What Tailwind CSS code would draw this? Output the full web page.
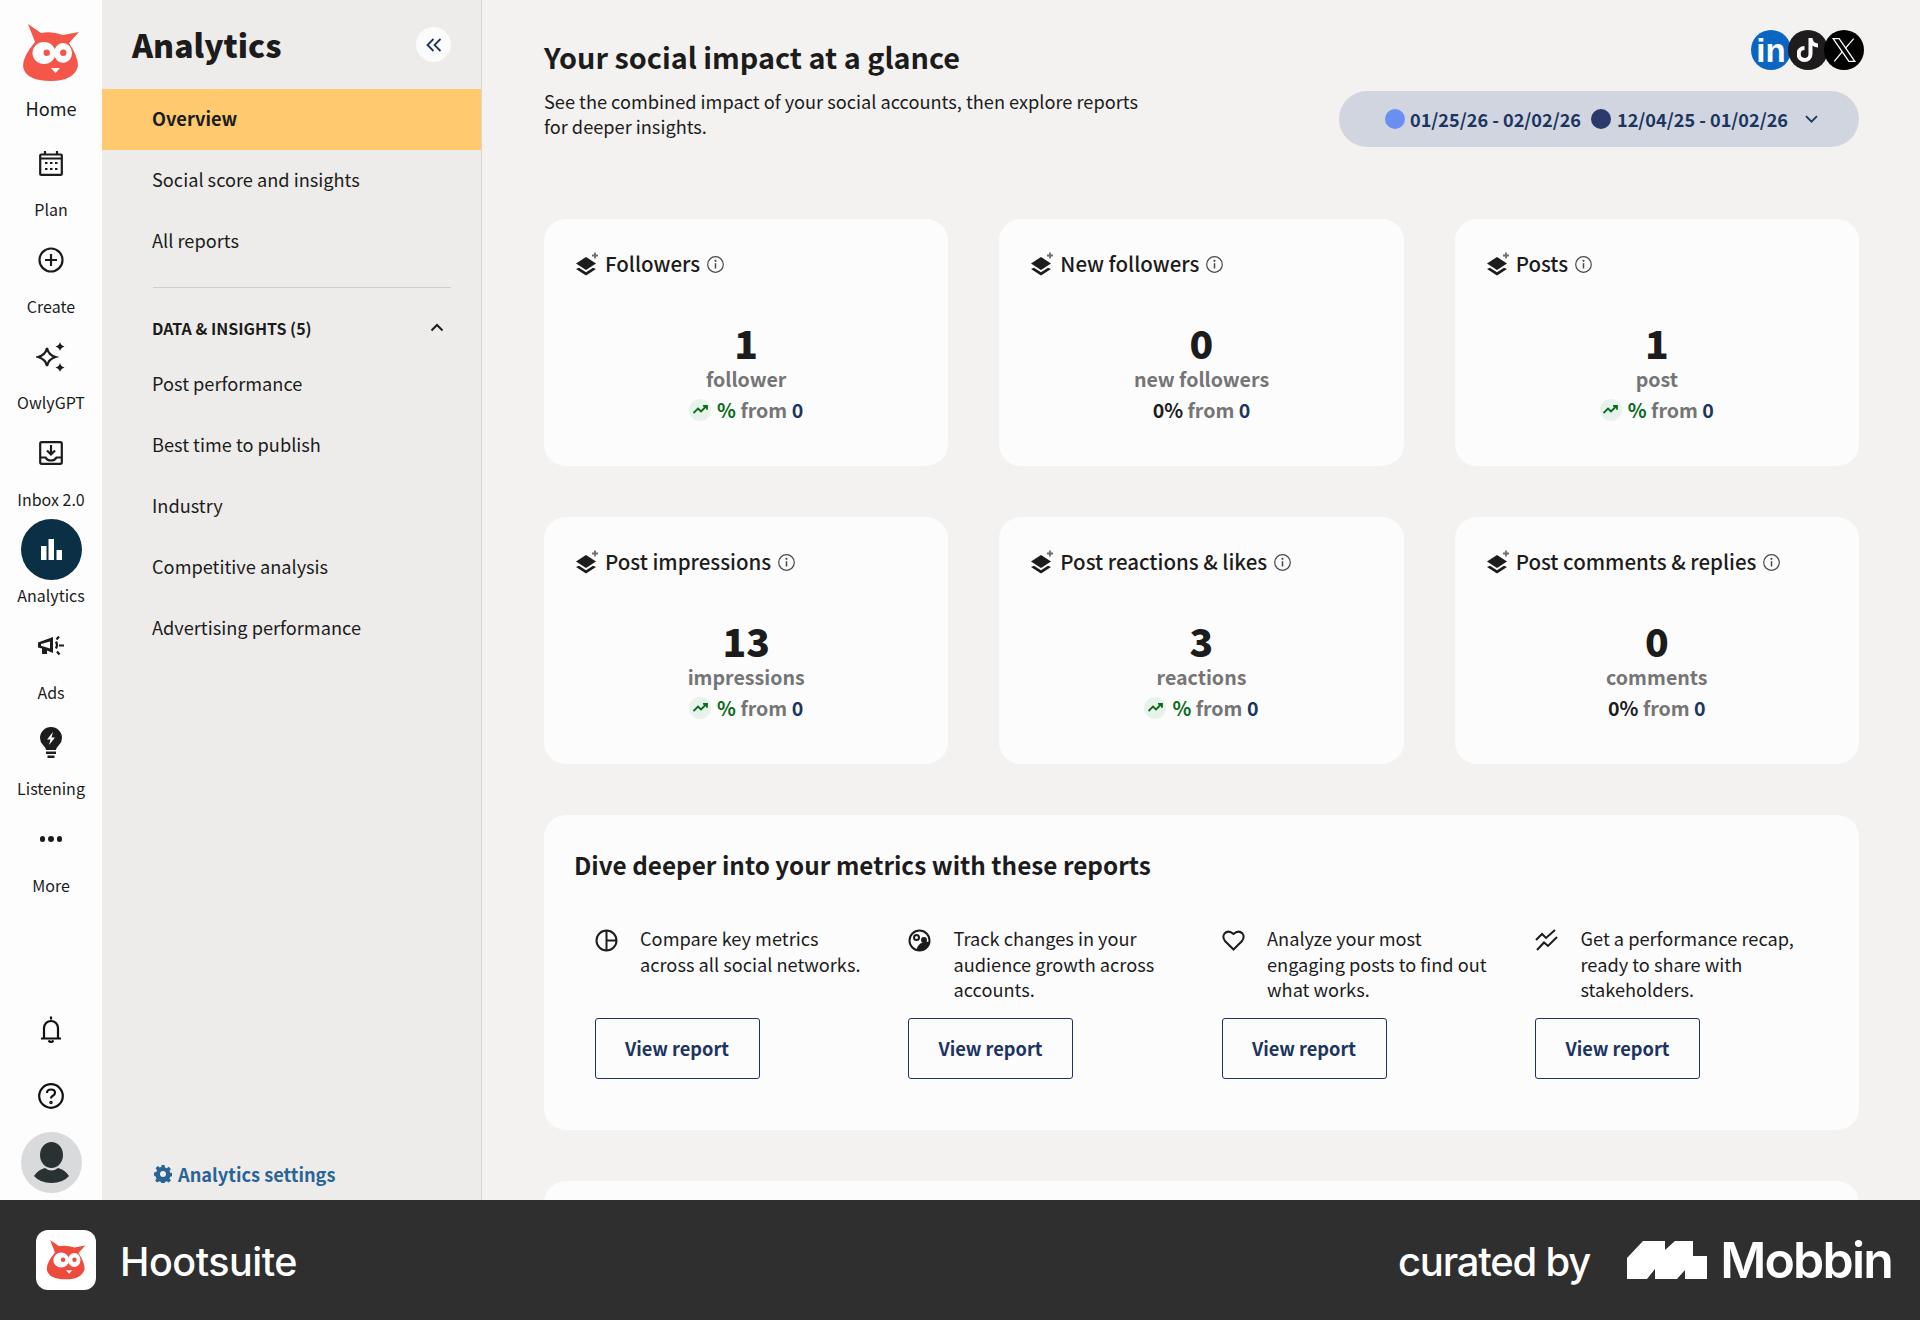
<!DOCTYPE html>
<html lang="en">
<head>
  <meta charset="UTF-8" />
  <title>Hootsuite Analytics</title>
  <script src="https://cdn.jsdelivr.net/npm/@tailwindcss/browser@4"></script>
</head>
<body class="font-['Noto_Sans_CJK_SC',sans-serif] text-[#1c1c1c]">
<div class="w-[1920px] h-[1320px] flex flex-col overflow-hidden">
  <div class="h-[1200px] flex">

    <!-- rail -->
    <nav class="w-[102px] shrink-0 bg-[#fdfdfd] flex flex-col items-center">
      <svg class="mt-[24px] w-[58px] h-[58px]" viewBox="0 0 58 58"><path d="M6 0 L19 9 Q30 7 41 11 L57 8 L47 19 Q56 32 56 42 Q52 57 29 57 Q3 57 1 42 Q1 32 13 18 Z" fill="#f4574a"/><ellipse cx="22" cy="29" rx="11.500" ry="11" fill="#fff"/><ellipse cx="41" cy="29" rx="9" ry="10" fill="#fff"/><circle cx="24.700" cy="28.700" r="3.200" fill="#f4574a"/><circle cx="41.300" cy="28.700" r="3.200" fill="#f4574a"/><path d="M33.500 34 L38 43 H29 Z" fill="#f4574a"/><path d="M29 44 H38 L33.500 49 Z" fill="#fff"/></svg>
      <div class="mt-[14px] h-[24px] leading-[24px] text-[18.200px]">Home</div>
      <div id="rail" class="mt-[23.500px] w-full"></div>
      <div class="mt-auto flex flex-col items-center pb-[7px]">
        <svg class="w-[22px] h-[27px]" viewBox="0 0 22 27" fill="none" stroke="#111" stroke-width="2.200"><path d="M1 22.500h20M4 22V12a7 7 0 0 1 14 0V22"/><path d="M11 0.500v3M8.500 24.500q2.500 3 5 0" /></svg>
        <svg class="mt-[40.500px] w-[26px] h-[26px]" viewBox="0 0 26 26" fill="none" stroke="#111" stroke-width="2.200"><circle cx="13" cy="13" r="11.800"/><path d="M9 10q0-3.500 4-3.500t4 3.200q0 2-2.500 3.300-1.500.8-1.500 2.500" /><circle cx="13" cy="19.500" r="0.700"/></svg>
        <svg class="mt-[23px] w-[61px] h-[61px]" viewBox="0 0 61 61"><circle cx="30.500" cy="30.500" r="30.500" fill="#d9dadb"/><ellipse cx="30.500" cy="23" rx="11.500" ry="13" fill="#2a3133"/><path d="M13 44 Q18 37 24 36 Q30.500 41 37 36 Q43 37 48 44 Q42 51 30.500 51 Q19 51 13 44Z" fill="#2a3133"/></svg>
      </div>
    </nav>

    <!-- section panel -->
    <aside class="w-[380px] shrink-0 bg-[#edecea] border-r border-[#d9d8d6] flex flex-col">
      <div class="h-[89px] pl-[30px] pr-[30px] flex items-center justify-between">
        <h1 class="text-[32px] leading-[44px] font-black mb-[2px]">Analytics</h1>
        <button class="w-[35px] h-[35px] rounded-full bg-[#fbfbfb] flex items-center justify-center"><svg class="w-4 h-4" viewBox="0 0 16 16" fill="none" stroke="#1d3461" stroke-width="1.800"><path d="M7.500 2 L1.500 8 L7.500 14M14.500 2 L8.500 8 L14.500 14"/></svg></button>
      </div>
      <a class="h-[61px] bg-[#fec96f] pl-[50px] pb-[1px] flex items-center text-[18.200px] font-bold">Overview</a>
      <a class="h-[61px] pl-[50px] pb-[2px] flex items-center text-[18.200px]">Social score and insights</a>
      <a class="h-[61px] pl-[50px] pb-[2px] flex items-center text-[18.200px]">All reports</a>
      <div class="ml-[51px] mr-[30px] mt-[15px] border-t border-[#cfcfcf]"></div>
      <div class="h-[41px] mt-[19px] ml-[50px] mr-[30px] flex items-center justify-between text-[16px] font-bold">
        <span>DATA &amp; INSIGHTS (5)</span>
        <svg class="w-[14px] h-[9px] mr-[7px]" viewBox="0 0 14 9" fill="none" stroke="#1c1c1c" stroke-width="2"><path d="M1.500 7.500 L7 2 L12.500 7.500"/></svg>
      </div>
      <div class="mt-[6px]">
        <a class="h-[61px] pl-[50px] pb-[2px] flex items-center text-[18.200px]">Post performance</a>
        <a class="h-[61px] pl-[50px] pb-[2px] flex items-center text-[18.200px]">Best time to publish</a>
        <a class="h-[61px] pl-[50px] pb-[2px] flex items-center text-[18.200px]">Industry</a>
        <a class="h-[61px] pl-[50px] pb-[2px] flex items-center text-[18.200px]">Competitive analysis</a>
        <a class="h-[61px] pl-[50px] pb-[2px] flex items-center text-[18.200px]">Advertising performance</a>
      </div>
      <a class="mt-auto mb-[12px] ml-[52px] flex items-center gap-[6px] text-[18.200px] font-bold text-[#2a6496]">
        <svg class="w-[18px] h-[18px]" viewBox="0 0 18 18" fill="#2a6496"><path d="M7.500 0h3l.5 2.500 1.700.7 2.100-1.400 2.100 2.100-1.400 2.100.7 1.700 2.300.5v3l-2.300.5-.7 1.700 1.400 2.100-2.100 2.100-2.100-1.400-1.700.7-.5 2.500h-3l-.5-2.500-1.700-.7-2.100 1.400-2.100-2.100 1.400-2.100-.7-1.700L0 10.500v-3l2.300-.5.7-1.700-1.400-2.100 2.100-2.100 2.100 1.400 1.700-.7Z"/><circle cx="9" cy="9" r="3" fill="#edecea"/></svg>
        Analytics settings
      </a>
    </aside>

    <!-- main -->
    <main class="flex-1 bg-[#f3f2f0] pl-[62px] pr-[61px] overflow-hidden">
      <header class="h-[219px] flex justify-between">
        <div class="pt-[36px] w-[640px]">
          <h2 class="text-[28.800px] leading-[42px] font-semibold">Your social impact at a glance</h2>
          <p class="mt-[11px] text-[18.200px] leading-[25px]">See the combined impact of your social accounts, then explore reports<br>for deeper insights.</p>
        </div>
        <div class="flex flex-col items-end">
          <div class="mt-[30px] mr-[-5px] flex items-center">
            <div class="w-10 h-10 rounded-full bg-[#0a66c2] flex items-center justify-center text-white text-[33px] leading-none font-bold font-['Liberation_Sans']">in</div>
            <div class="w-10 h-10 -ml-[3.500px] rounded-full bg-[#1e1c1d] flex items-center justify-center"><svg class="w-[22px] h-[24px]" viewBox="0 0 22 24" fill="#fff"><path d="M11.500 0h4q.3 5 5.500 5.500v4q-3 0-5.500-1.700V16a8 8 0 1 1-8-8v4.100a3.900 3.900 0 1 0 4 3.900Z"/></svg></div>
            <div class="w-10 h-10 -ml-[3.500px] rounded-full bg-black flex items-center justify-center"><svg class="w-[26px] h-[26px]" viewBox="0 0 24 24" fill="none" stroke="#fff" stroke-width="1.200"><path d="M2 1.500h5.500L22 22.500h-5.500Z"/><path d="M21 1.500 13.200 10.500M10.500 13.500 3 22.500"/></svg></div>
          </div>
          <div class="mt-[21px] w-[520px] h-[56px] pt-[2px] rounded-full bg-[#d0d5df] flex items-center pl-[46px] text-[18.100px] font-bold text-[#1d3461]">
            <span class="w-5 h-5 mb-[2px] rounded-full bg-[#6b8ff0]"></span>
            <span class="ml-[5px] w-[171px] whitespace-nowrap">01/25/26 - 02/02/26</span>
            <span class="ml-[10px] w-5 h-5 mb-[2px] rounded-full bg-[#2a3a6b]"></span>
            <span class="ml-[6px] w-[171px] whitespace-nowrap">12/04/25 - 01/02/26</span>
            <svg class="ml-[17px] mb-[2px] w-[13px] h-[8px]" viewBox="0 0 13 8" fill="none" stroke="#1d3461" stroke-width="1.800"><path d="M1 1.200 L6.500 6.700 L12 1.200"/></svg>
          </div>
        </div>
      </header>

      <section id="cards" class="grid grid-cols-3 gap-x-[51px] gap-y-[51px]"></section>

      <section class="mt-[51px] h-[315px] rounded-[22px] bg-[#fcfcfc] pl-[30px] pt-[31px]">
        <h3 class="text-[24.300px] leading-[38px] font-semibold">Dive deeper into your metrics with these reports</h3>
        <div id="reports" class="mt-[42px] ml-[20.500px] grid grid-cols-[313.500px_313.500px_313.500px_313.500px]"></div>
      </section>
      <div class="mt-[51px] h-[60px] rounded-t-[22px] bg-[#fcfcfc]"></div>
    </main>
  </div>

  <!-- footer -->
  <footer class="h-[120px] bg-[#2f2f2f] flex items-center pl-[36px] pr-[28px] text-white font-['Inter',sans-serif]">
    <div class="w-[60px] h-[60px] rounded-[12px] bg-white flex items-center justify-center">
      <svg class="w-[40px] h-[40px]" viewBox="0 0 58 58"><path d="M6 0 L19 9 Q30 7 41 11 L57 8 L47 19 Q56 32 56 42 Q52 57 29 57 Q3 57 1 42 Q1 32 13 18 Z" fill="#ee4b3d"/><ellipse cx="22" cy="29" rx="11.500" ry="11" fill="#fff"/><ellipse cx="41" cy="29" rx="9" ry="10" fill="#fff"/><circle cx="24.700" cy="28.700" r="3.200" fill="#ee4b3d"/><circle cx="41.300" cy="28.700" r="3.200" fill="#ee4b3d"/><path d="M29 44 H38 L33.500 49 Z" fill="#fff"/></svg>
    </div>
    <div class="ml-[24px] mt-[5px] text-[39.500px] font-medium tracking-[-0.5px]">Hootsuite</div>
    <div class="ml-auto mt-[3px] text-[40px] font-medium tracking-[-1.200px]">curated by</div>
    <svg class="ml-[37px] w-[80px] h-[38px]" viewBox="0 0 80 38" fill="#fff"><path d="M0 17 L16 0 H38 V9 L48 0 H66 V15 H80 V38 H58 V29 L50 38 H28 V28 L20 38 H0 Z"/></svg>
    <div class="ml-[13px] text-[50px] leading-none font-semibold tracking-[-1.800px]">Mobbin</div>
  </footer>
</div>

<script>
// ───── rail ─────
const railIcons = [
  ['Plan', '<svg class="w-6 h-[25px]" viewBox="0 0 24 25" fill="none" stroke="#1c1c1c" stroke-width="2.200"><rect x="1.200" y="3.500" width="21.600" height="20.400" rx="1"/><path d="M1.500 7.500h21M6 0v3.500M18 0v3.500"/><path d="M6 12h2.500M11 12h2.500M16 12h2.500M6 18h2.500M11 18h2.500M16 18h2.500" stroke-width="2"/></svg>'],
  ['Create', '<svg class="w-[26px] h-[26px]" viewBox="0 0 26 26" fill="none" stroke="#1c1c1c" stroke-width="2.200"><circle cx="13" cy="13" r="11.500"/><path d="M13 7v12M7 13h12"/></svg>'],
  ['OwlyGPT', '<svg class="w-[30px] h-[30px]" viewBox="0 0 30 30" fill="none"><path d="M11 6 Q12.500 13 19.500 15 Q12.500 17 11 24 Q9.500 17 2 15 Q9.500 13 11 6Z" stroke="#1c1c1c" stroke-width="2.200"/><path d="M24 0 Q24.800 3.500 28.500 4.500 Q24.800 5.500 24 9 Q23.200 5.500 19.500 4.500 Q23.200 3.500 24 0ZM24 21 Q24.800 24.500 28.500 25.500 Q24.800 26.500 24 30 Q23.200 26.500 19.500 25.500 Q23.200 24.500 24 21Z" fill="#1c1c1c"/></svg>'],
  ['Inbox 2.0', '<svg class="w-6 h-6" viewBox="0 0 24 24" fill="none" stroke="#1c1c1c" stroke-width="2.200"><rect x="1.200" y="1.200" width="21.600" height="21.600" rx="1.500"/><path d="M12 4v9M8 9.500l4 4 4-4" /><path d="M1.500 16.500h5Q8 19.500 12 19.500T17.500 16.500h5"/></svg>'],
  ['Analytics', '<div class="w-[61px] h-[61px] shrink-0 rounded-full bg-[#0b2f45] flex items-center justify-center"><svg class="w-[21px] h-[21px]" viewBox="0 0 21 21" fill="#fff"><rect x="0" y="7" width="5.500" height="14"/><rect x="7.500" y="0" width="5.500" height="21"/><rect x="15.500" y="11" width="5.500" height="10"/></svg></div>'],
  ['Ads', '<svg class="w-[26px] h-[20px]" viewBox="0 0 26 20" fill="none"><path d="M0 6.500 L15 1 V17 L9 14.500 V18 H4 V12.500 L0 11.500 Z" fill="#1c1c1c"/><path d="M3 8 L12 5.500 V12.500 L3 9.800Z" fill="#fdfdfd"/><path d="M18 5.500 Q20 9 18 12.500" stroke="#1c1c1c" stroke-width="2.200"/><path d="M18.500 3.500 L21 0.500M21 9.500H26M19 15.500l2.500 3" stroke="#1c1c1c" stroke-width="2.200"/></svg>'],
  ['Listening', '<svg class="w-[22px] h-[31px]" viewBox="0 0 22 31" fill="#1c1c1c"><path d="M11 0 A11 11 0 0 1 22 11 Q22 15 19 18 Q16 21 16 23 H6 Q6 21 3 18 Q0 15 0 11 A11 11 0 0 1 11 0Z"/><path d="M13 5 L7 12.500 H10.500 L9 18 L15 10.500 H11.500Z" fill="#fff"/><rect x="6" y="24.500" width="10" height="2.500"/><rect x="7.500" y="28.500" width="7" height="2.500"/></svg>'],
  ['More', '<div class="flex gap-[3px]"><span class="w-[5.500px] h-[5.500px] rounded-full bg-[#1c1c1c]"></span><span class="w-[5.500px] h-[5.500px] rounded-full bg-[#1c1c1c]"></span><span class="w-[5.500px] h-[5.500px] rounded-full bg-[#1c1c1c]"></span></div>'],
];
document.getElementById('rail').innerHTML = railIcons.map(([label, icon]) => `
  <div class="h-[96.500px] flex flex-col items-center">
    <div class="h-10 flex items-center justify-center">${icon}</div>
    <div class="mt-[13.500px] h-6 leading-6 text-[16px]">${label}</div>
  </div>`).join('');

// ───── metric cards ─────
const upBadge = '<span class="w-[22px] h-[22px] rounded-full bg-[#e6f2ea] flex items-center justify-center mr-[6px]"><svg class="w-[15px] h-[9px]" viewBox="0 0 15 9" fill="none" stroke="#0a6b1e" stroke-width="1.800"><path d="M0.500 8 L5 3.500 L8 6.500 L13.500 1M10 0.800h4v4"/></svg></span><span class="text-[#0a6b1e]">%</span>';
const flat = '<span class="text-[#1c1c1c]">0%</span>';
const cards = [
  ['Followers', '1', 'follower', upBadge],
  ['New followers', '0', 'new followers', flat],
  ['Posts', '1', 'post', upBadge],
  ['Post impressions', '13', 'impressions', upBadge],
  ['Post reactions &amp; likes', '3', 'reactions', upBadge],
  ['Post comments &amp; replies', '0', 'comments', flat],
];
document.getElementById('cards').innerHTML = cards.map(([title, num, unit, change]) => `
  <div class="h-[247px] rounded-[22px] bg-[#fcfcfc] pl-[32px] pt-[32px]">
    <div class="flex items-center h-[26px] text-[20.500px] font-medium">
      <svg class="w-[24px] h-[25px]" viewBox="0 0 24 25"><path d="M10 5 L20 11.500 L10 18 L0 11.500Z" fill="#1c1c1c"/><path d="M3 15.800 L0 17 L10 23.500 L20 17 L17 15.800 L10 20.200Z" fill="#1c1c1c"/><path d="M19 0.500v6M16 3.500h6" stroke="#6e6e6e" stroke-width="1.800"/></svg>
      <span class="ml-[5px] mb-[1px]">${title}</span>
      <svg class="ml-[7px] w-[17px] h-[17px]" viewBox="0 0 17 17" fill="none" stroke="#4a4a4a" stroke-width="1.200"><circle cx="8.500" cy="8.500" r="7.800"/><path d="M8.500 7.200v5.300" stroke-width="1.500"/><circle cx="8.500" cy="4.800" r="0.500"/></svg>
    </div>
    <div class="mt-[44px] -ml-[32px] flex flex-col items-center">
      <div class="h-[42px] leading-[42px] text-[39px] font-black">${num}</div>
      <div class="h-[26px] leading-[26px] mt-[3px] mb-[2px] text-[19.600px] font-bold text-[#757575]">${unit}</div>
      <div class="h-[31px] flex items-center text-[19.600px] font-bold text-[#757575]">${change}&nbsp;from&nbsp;<span class="text-[#1d3461]">0</span></div>
    </div>
  </div>`).join('');

// ───── report links ─────
const reports = [
  ['Compare key metrics<br>across all social networks.', '<circle cx="11.500" cy="11.500" r="10"/><path d="M11.500 1.500v20M11.500 11.500h10"/>'],
  ['Track changes in your<br>audience growth across<br>accounts.', '<circle cx="11.500" cy="11.500" r="10"/><circle cx="8.500" cy="8.500" r="2.500"/><circle cx="16" cy="11" r="2" fill="#1c1c1c"/><path d="M9.500 21q1-5 5.500-6.500 3-1 6-.5-1.500 6.500-11.500 7z" fill="#1c1c1c"/>'],
  ['Analyze your most<br>engaging posts to find out<br>what works.', '<path d="M11.500 20.500 L3 12 Q0 8 2.500 4.500 Q6.500 0.500 11.500 5 Q16.500 0.500 20.500 4.500 Q23 8 20 12Z"/>'],
  ['Get a performance recap,<br>ready to share with<br>stakeholders.', '<path d="M1 11 L7 5 L11 9 L20 1M2 21 L9 13.500 L13 17 L22 8"/>'],
];
document.getElementById('reports').innerHTML = reports.map(([text, icon]) => `
  <div>
    <div class="h-[77px] flex"><svg class="mt-[3px] w-[23px] h-[23px] shrink-0" viewBox="0 0 23 23" fill="none" stroke="#1c1c1c" stroke-width="2">${icon}</svg><p class="ml-[22.500px] whitespace-nowrap text-[18.200px] leading-[25.500px]">${text}</p></div>
    <button class="mt-[15px] w-[165px] h-[61px] border-[1.500px] border-[#1d3461] rounded-[3px] text-[18.200px] font-bold text-[#1d3461]">View report</button>
  </div>`).join('');
</script>
</body>
</html>
